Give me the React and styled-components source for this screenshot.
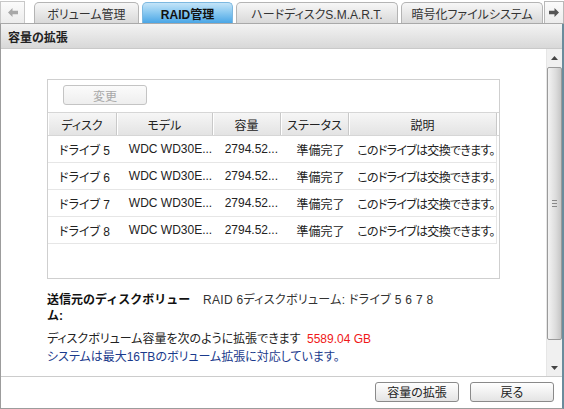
import React from 'react';
import styled, { createGlobalStyle, css } from 'styled-components';

const FONT = '"Liberation Sans", "Noto Sans CJK JP", sans-serif';

const GlobalStyle = createGlobalStyle`
  html, body {
    margin: 0;
    padding: 0;
    background: #ffffff;
  }
  body {
    font-family: ${FONT};
    font-size: 12px;
    color: #222;
    font-feature-settings: "palt";
  }
`;

const tabs = [
  { label: 'ボリューム管理', width: 105 },
  { label: 'RAID管理', width: 91, active: true },
  { label: 'ハードディスクS.M.A.R.T.', width: 162 },
  { label: '暗号化ファイルシステム', width: 142 },
];

const columns = [
  { title: 'ディスク', width: 69, pad: 11 },
  { title: 'モデル', width: 96, pad: 12 },
  { title: '容量', width: 68, pad: 12 },
  { title: 'ステータス', width: 68, pad: 16 },
  { title: '説明', width: 148, pad: 9, tight: true },
];

const rows = [5, 6, 7, 8].map(n => [
  `ドライブ ${n}`,
  'WDC WD30E...',
  '2794.52...',
  '準備完了',
  'このドライブは交換できます。',
]);

const ArrowLeft = () => (
  <svg width="10" height="9" viewBox="0 0 10 9">
    <path d="M0 4.5 L4.5 0 L4.5 2.8 L10 2.8 L10 6.2 L4.5 6.2 L4.5 9 Z" fill="#a8a8a8" />
  </svg>
);

const ArrowRight = () => (
  <svg width="10" height="9" viewBox="0 0 10 9">
    <path d="M10 4.5 L5.5 0 L5.5 2.8 L0 2.8 L0 6.2 L5.5 6.2 L5.5 9 Z" fill="#555" />
  </svg>
);

const Caret = ({ down }) => (
  <svg width="7" height="4" viewBox="0 0 7 4">
    <path d={down ? 'M0 0 L7 0 L3.5 4 Z' : 'M0 4 L7 4 L3.5 0 Z'} fill="#444" />
  </svg>
);

const App = () => (
  <Page>
    <GlobalStyle />
    <TabBar>
      <NavBox side="left"><ArrowLeft /></NavBox>
      <TabList>
        {tabs.map(t => (
          <Tab key={t.label} active={t.active} style={{ width: t.width }}>{t.label}</Tab>
        ))}
      </TabList>
      <NavBox side="right"><ArrowRight /></NavBox>
    </TabBar>

    <Frame>
      <SectionHeader>容量の拡張</SectionHeader>

      <Body>
        <Content>
          <Grid>
            <Toolbar>
              <Button disabled>変更</Button>
            </Toolbar>
            <HeadRow>
              {columns.map(c => (
                <HeadCell key={c.title} style={{ width: c.width }}>{c.title}</HeadCell>
              ))}
            </HeadRow>
            <RowArea>
              {rows.map((r, i) => (
                <Row key={i}>
                  {r.map((v, j) => (
                    <Cell
                      key={j}
                      pad={columns[j].pad}
                      tight={columns[j].tight}
                      style={{ width: columns[j].width }}
                    >
                      {v}
                    </Cell>
                  ))}
                </Row>
              ))}
            </RowArea>
          </Grid>

          <InfoRow>
            <InfoLabel>送信元のディスクボリューム:</InfoLabel>
            <InfoValue>RAID 6ディスクボリューム: ドライブ 5 6 7 8</InfoValue>
          </InfoRow>
          <Line>
            ディスクボリューム容量を次のように拡張できます <Amount>5589.04 GB</Amount>
          </Line>
          <Note>システムは最大16TBのボリューム拡張に対応しています。</Note>
        </Content>

        <Scrollbar>
          <ScrollButton><Caret /></ScrollButton>
          <Thumb>
            <Grip />
          </Thumb>
          <ScrollButton down><Caret down /></ScrollButton>
        </Scrollbar>
      </Body>

      <Footer>
        <Button>容量の拡張</Button>
        <Button>戻る</Button>
      </Footer>
    </Frame>
  </Page>
);

const Page = styled.div`
  width: 564px;
  height: 409px;
  display: flex;
  flex-direction: column;
  overflow: hidden;
  background: #fff;
`;

const TabBar = styled.div`
  height: 23px;
  display: flex;
  align-items: flex-end;
  border-bottom: 1px solid #a9a9a9;
  background: #fff;
`;

const NavBox = styled.div`
  height: 22px;
  display: flex;
  align-items: center;
  justify-content: center;
  box-sizing: border-box;
  border: 1px solid #c8c8c8;
  border-bottom: none;
  background: linear-gradient(#fbfbfb, #ececec);

  ${p => p.side === 'left' && css`
    width: 25px;
    margin-right: 9px;
  `}
  ${p => p.side === 'right' && css`
    width: 20px;
    margin-left: auto;
    border-color: #b8b8b8;
  `}
`;

const TabList = styled.div`
  display: flex;
  gap: 3px;
`;

const Tab = styled.div`
  height: 21px;
  box-sizing: border-box;
  display: flex;
  align-items: center;
  justify-content: center;
  border: 1px solid #b4b4b4;
  border-bottom: none;
  border-radius: 5px 5px 0 0;
  background: linear-gradient(#f7f7f7, #d9d9d9);
  color: #333;
  font-size: 12px;
  white-space: nowrap;

  ${p => p.active && css`
    border-color: #7cb8e0;
    background: linear-gradient(#c4e4f8 0%, #8ccaf1 45%, #4aa6e6 100%);
    color: #111;
    font-weight: bold;
  `}
`;

const Frame = styled.div`
  flex: 1;
  display: flex;
  flex-direction: column;
  border-left: 1px solid #9c9c9c;
  border-right: 2px solid #6a8c9c;
  border-bottom: 1px solid #9c9c9c;
  min-height: 0;
`;

const SectionHeader = styled.div`
  height: 24px;
  display: flex;
  align-items: center;
  padding-left: 7px;
  background: linear-gradient(#f3f3f3, #d8d8d8);
  border-bottom: 1px solid #c9c9c9;
  font-weight: bold;
  font-size: 12px;
  color: #222;
`;

const Body = styled.div`
  flex: 1;
  display: flex;
  min-height: 0;
`;

const Content = styled.div`
  flex: 1;
  padding: 30px 0 0 46px;
`;

const Grid = styled.div`
  width: 453px;
  height: 200px;
  box-sizing: border-box;
  border: 1px solid #cfcfcf;
  display: flex;
  flex-direction: column;
`;

const Toolbar = styled.div`
  height: 32px;
  box-sizing: border-box;
  padding: 5px 0 0 15px;
`;

const Button = styled.button`
  width: 84px;
  height: 20px;
  padding: 0;
  box-sizing: border-box;
  border: 1px solid #8a8a8a;
  border-radius: 3px;
  background: linear-gradient(#ffffff, #e4e4e4);
  font-family: ${FONT};
  font-size: 12px;
  color: #222;
  font-feature-settings: "palt";

  &:disabled {
    border-color: #c4c4c4;
    color: #a8a8a8;
    background: linear-gradient(#fbfbfb, #eeeeee);
  }
`;

const HeadRow = styled.div`
  display: flex;
  height: 24px;
  box-sizing: border-box;
  border-top: 1px solid #d6d6d6;
  border-bottom: 1px solid #d6d6d6;
`;

const HeadCell = styled.div`
  display: flex;
  align-items: center;
  justify-content: center;
  box-sizing: border-box;
  background: linear-gradient(#f6f6f6, #e3e3e3);
  border-right: 1px solid #c9c9c9;
  box-shadow: inset 1px 0 0 #fff;
  color: #222;
`;

const RowArea = styled.div`
  flex: 1;
`;

const Row = styled.div`
  display: flex;
  height: 27px;
  width: 449px;
  box-sizing: border-box;
  border-bottom: 1px solid #e6e6e6;
  border-right: 1px solid #e6e6e6;
`;

const Cell = styled.div`
  display: flex;
  align-items: center;
  box-sizing: border-box;
  padding-left: ${p => p.pad}px;
  white-space: nowrap;
  overflow: hidden;
  color: #222;
  ${p => p.tight && css`
    letter-spacing: -0.7px;
  `}
`;

const InfoRow = styled.div`
  display: flex;
  margin-top: 13px;
  line-height: 16px;
`;

const InfoLabel = styled.div`
  width: 146px;
  font-weight: bold;
  color: #111;
  font-feature-settings: normal;
  word-break: break-all;
`;

const InfoValue = styled.div`
  margin-left: 10px;
  color: #333;
  letter-spacing: 0.3px;
`;

const Line = styled.div`
  margin-top: 6px;
  line-height: 18px;
  color: #222;
`;

const Amount = styled.span`
  color: #f01818;
  margin-left: 3px;
`;

const Note = styled.div`
  line-height: 18px;
  color: #1a3a8c;
`;

const Scrollbar = styled.div`
  width: 15px;
  display: flex;
  flex-direction: column;
  background: #f0f0f0;
  border-left: 1px solid #e6e6e6;
`;

const ScrollButton = styled.div`
  height: 18px;
  display: flex;
  align-items: center;
  justify-content: center;
  ${p => p.down && css`
    height: 36px;
    align-items: flex-end;
    padding-bottom: 6px;
    box-sizing: border-box;
  `}
`;

const Thumb = styled.div`
  flex: 1;
  box-sizing: border-box;
  border: 1px solid #9a9a9a;
  border-radius: 2px;
  background: linear-gradient(90deg, #f3f3f3, #dcdcdc 60%, #c6c6c6);
  display: flex;
  align-items: center;
  justify-content: center;
`;

const Grip = styled.div`
  width: 5px;
  height: 5px;
  border-top: 1px solid #888;
  border-bottom: 1px solid #888;
  position: relative;
  &::after {
    content: '';
    position: absolute;
    left: 0;
    right: 0;
    top: 2px;
    border-top: 1px solid #888;
  }
`;

const Footer = styled.div`
  height: 32px;
  box-sizing: border-box;
  border-top: 1px solid #cccccc;
  display: flex;
  align-items: center;
  justify-content: flex-end;
  gap: 11px;
  padding: 0 8px 2px 0;
`;

export default App;
